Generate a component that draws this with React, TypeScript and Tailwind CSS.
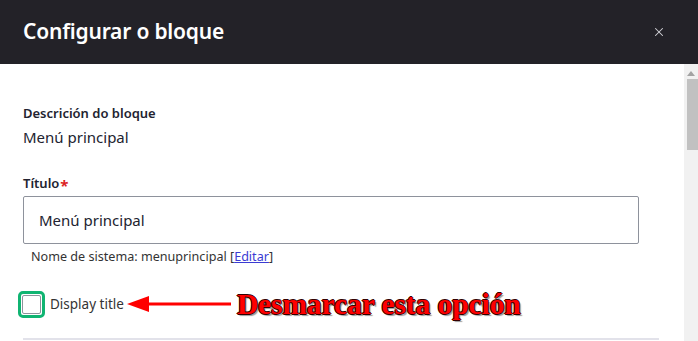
import { X } from 'lucide-react';

export default function App() {
  return (
    <div className="w-[698px] h-[341px] overflow-hidden bg-white flex flex-col font-['Noto_Sans',sans-serif] text-[#222330]">
      <header className="h-16 shrink-0 bg-[#232228] flex items-center justify-between pl-[23px] pr-[32px]">
        <h1 className="text-white text-[21px] font-semibold tracking-[-0.2px]">Configurar o bloque</h1>
        <X className="w-[14px] h-[14px] text-[#d4d4d8]" strokeWidth={1.8} />
      </header>

      <div className="flex flex-1 min-h-0">
        <main className="flex-1 pl-[23px] pr-[24px] pt-[40px]">
          <div className="text-[13px] font-semibold leading-[18px]">Descrición do bloque</div>
          <div className="text-[15px] leading-[20px] mt-[5px]">Menú principal</div>

          <div className="mt-[27px] text-[13px] font-semibold leading-[18px] flex items-center">
            Título<span className="text-[#dc2323] text-[15px] font-bold leading-[12px] ml-[1px] mt-[3px]">*</span>
          </div>
          <div className="mt-[4px] mr-[21px] h-[48px] border border-[#8e929c] rounded-[2px] flex items-center pl-[15px] text-[15px]">
            Menú principal
          </div>
          <div className="mt-[4px] pl-[8px] text-[12.6px] leading-[18px] text-[#333]">
            Nome de sistema: menuprincipal [<span className="text-[#3b3bd3] underline">Editar</span>]
          </div>

          <div className="mt-[23px] -ml-[5px] flex items-center">
            <div className="w-[27px] h-[27px] rounded-[5px] border-[3px] border-[#10b472] flex items-center justify-center">
              <div className="w-[19px] h-[19px] rounded-[2px] border border-[#8e929c] bg-white" />
            </div>
            <span className="ml-[5px] text-[13.5px] text-[#333]">Display title</span>
            <svg width="106" height="18" viewBox="0 0 106 18" className="ml-[3px]">
              <polygon points="0,9 22,1 22,17" fill="#ff0000" />
              <rect x="18" y="7.5" width="86" height="3" fill="#ff0000" />
            </svg>
            <span className="ml-[4px] font-['Liberation_Serif',serif] font-bold text-[29.3px] leading-[30px] text-[#ff0000] [text-shadow:1px_0_0_#300,-1px_0_0_#300,0_1px_0_#300,0_-1px_0_#300,2px_2px_1px_#999]">
              Desmarcar esta opción
            </span>
          </div>

          <div className="mt-[19px] h-[2px] bg-[#e2e2ea] mr-[1px]" />
        </main>

        <div className="w-[14px] bg-[#f1f1f1] flex flex-col items-center pt-[7px]">
          <svg width="8" height="5" viewBox="0 0 8 5">
            <polygon points="4,0 8,5 0,5" fill="#a3a3a3" />
          </svg>
          <div className="mt-[3px] w-[11px] h-[71px] bg-[#c1c1c1] ml-[2px]" />
        </div>
      </div>
    </div>
  );
}
